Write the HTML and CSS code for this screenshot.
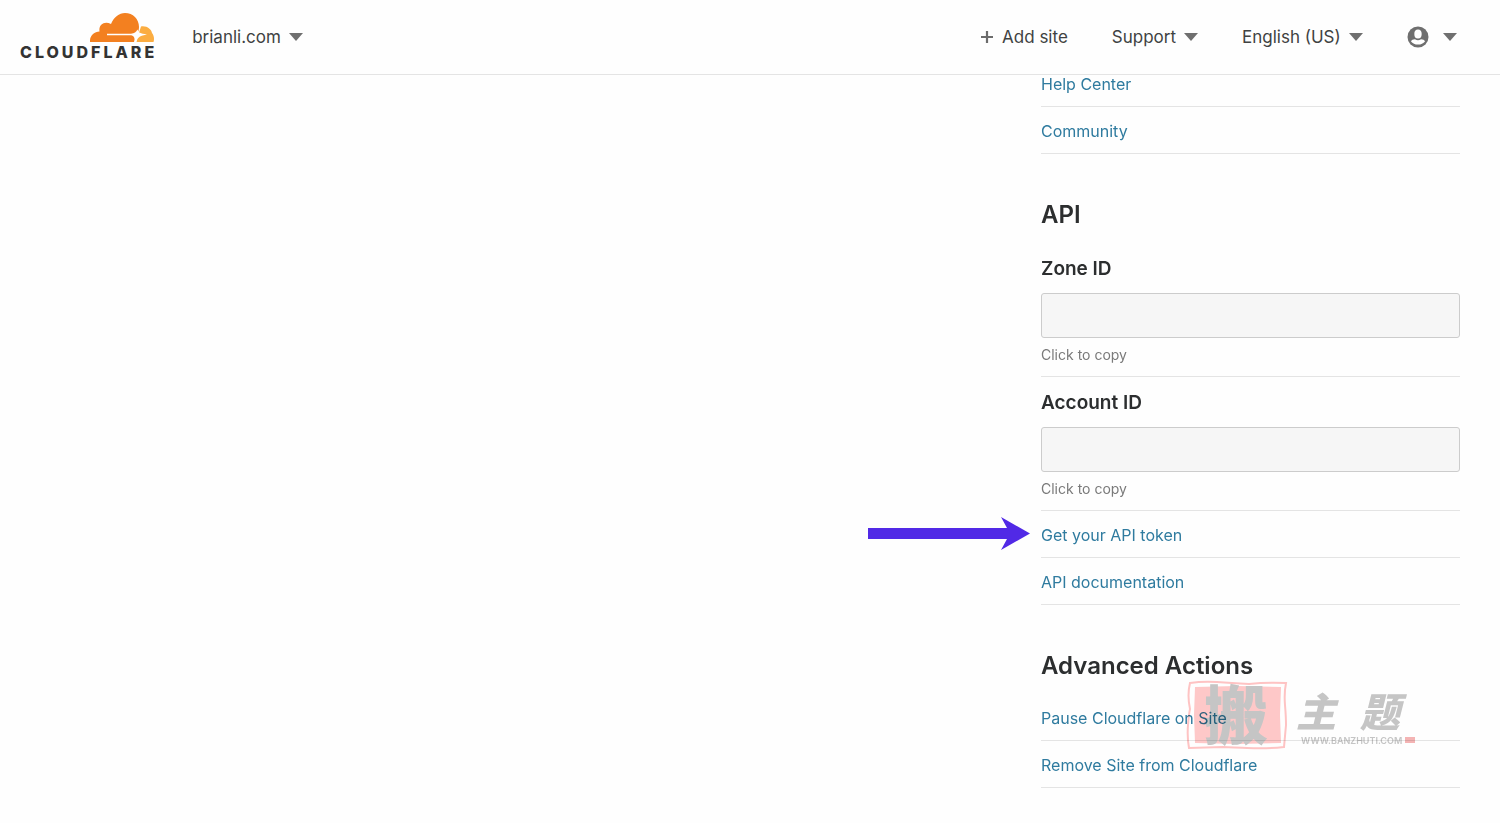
FILE: index.html
```html
<!DOCTYPE html>
<html lang="en">
<head>
    <meta charset="UTF-8">
    <meta name="viewport" content="width=device-width, initial-scale=1">
    <title>brianli.com | Cloudflare</title>
    <link rel="stylesheet" href="styles.css">
</head>
<body>

<header class="header">
    <a class="logo" href="#" aria-label="Cloudflare">
        <svg class="logo-cloud" viewBox="0 0 64 30" width="64" height="30" aria-hidden="true">
            <path fill="#f38020" d="M0 29 C-.5 23 4 18.500 9.500 18.500 C8.500 12 14 7.500 21 11 C24 4 29 0 35 0 C43 0 49 6 49 14 C49 17 48 19 47 21 L44 29 Z"/>
            <path fill="#fbad41" d="M46 29 L51 13.500 C57 12.500 61.500 16.500 62 20 C64 22.500 64.500 26 63.500 29 Z"/>
            <path fill="#fff" d="M17 20.700 L41 20.700 C44.500 20.500 46 19 47.500 16.500 C48.500 19.500 50 20.500 57 21.500 C50.500 22.500 47.500 24 46.500 29 L44.500 29 C45 25 44 22.500 41 22.200 L17 22.200 Z"/>
        </svg>
        <span class="logo-text">CLOUDFLARE</span>
    </a>
    <button class="nav-btn site" type="button" aria-haspopup="true">brianli.com<span class="caret"></span></button>

    <nav class="nav">
        <a class="nav-btn" href="#">
            <svg class="plus" viewBox="0 0 14 14" width="14" height="14" aria-hidden="true">
                <path d="M7 1v12M1 7h12" stroke="#6b6b6b" stroke-width="2.200"/>
            </svg>
            Add site
        </a>
        <button class="nav-btn" type="button" aria-haspopup="true">Support<span class="caret"></span></button>
        <label class="nav-btn">
            <select class="language" aria-label="Language">
                <option>English (US)</option>
            </select>
            <span class="caret"></span>
        </label>
        <button class="nav-btn account" type="button" aria-label="Account" aria-haspopup="true">
            <svg viewBox="0 0 22 22" width="22" height="22" aria-hidden="true">
                <circle cx="11" cy="11" r="10.500" fill="#6f6f6f"/>
                <ellipse cx="11" cy="8" rx="3.700" ry="4.500" fill="#fff"/>
                <path fill="#fff" d="M4 15.500 C4.500 14 6 13.500 8 13.300 Q11 15 14 13.300 C16 13.500 17.500 14 18 15.500 Q15.500 18.600 11 18.600 Q6.500 18.600 4 15.500 Z"/>
            </svg>
            <span class="caret"></span>
        </button>
    </nav>
</header>

<main class="main">
    <aside class="sidebar">
        <ul class="links">
            <li><a href="#">Help Center</a></li>
            <li><a href="#">Community</a></li>
        </ul>

        <section class="section">
            <h2>API</h2>
            <div class="field">
                <label for="zone-id">Zone ID</label>
                <input id="zone-id" type="text" readonly>
                <p>Click to copy</p>
            </div>
            <div class="field">
                <label for="account-id">Account ID</label>
                <input id="account-id" type="text" readonly>
                <p>Click to copy</p>
            </div>
            <ul class="links">
                <li>
                    <svg class="arrow" viewBox="0 0 162 34" width="162" height="34" aria-hidden="true">
                        <path fill="#5129e6" d="M0 11 H139 L133 0 L162 16.500 L133 33 L139 22 H0 Z"/>
                    </svg>
                    <a href="#">Get your API token</a>
                </li>
                <li><a href="#">API documentation</a></li>
            </ul>
        </section>

        <section class="section">
            <h2>Advanced Actions</h2>
            <ul class="links">
                <li><a href="#">Pause Cloudflare on Site</a></li>
                <li><a href="#">Remove Site from Cloudflare</a></li>
            </ul>
            <svg class="stamp" viewBox="0 0 230 70" width="230" height="70" aria-hidden="true">
                <path fill="none" stroke="#ffc4c4" stroke-width="2" d="M3 2 Q16 0 30 1 T62 3 Q80 1 99 2 Q97 12 98 24 T99 44 L97 66 Q80 68 60 67 T36 66 L2 67 Q0 56 1 44 T3 28 Q0 14 3 2 Z"/>
                <path fill="#ffc9c9" d="M8 6 L50 5 L94 6 L93 34 L94 62 L50 63 L8 62 L7 34 Z"/>
                <text class="stamp-big" x="17" y="58">搬</text>
                <text class="stamp-name" x="109" y="46">主</text>
                <text class="stamp-name" x="173" y="46">题</text>
                <text class="stamp-url" x="114" y="63">WWW.BANZHUTI.COM</text>
                <rect x="218" y="56" width="10" height="6" fill="#f5b5b5"/>
            </svg>
        </section>
    </aside>
</main>

</body>
</html>
```
FILE: styles.css
```css
* {
    box-sizing: border-box;
}

body {
    margin: 0;
    font-family: Inter, "Liberation Sans", "Noto Sans CJK SC", sans-serif;
    font-size: 16px;
    line-height: 24px;
    color: #36393a;
    background: #fefefe;
}

ul {
    margin: 0;
    padding: 0;
    list-style: none;
}

a {
    text-decoration: none;
}

.header {
    position: fixed;
    top: 0;
    left: 0;
    right: 0;
    z-index: 10;
    display: flex;
    align-items: center;
    height: 75px;
    padding: 0 43px 0 20px;
    background: #fefefe;
    border-bottom: 1px solid #e4e4e4;
}

.logo {
    display: flex;
    flex-direction: column;
    color: #333;
}

.logo-cloud {
    align-self: flex-end;
}

.logo-text {
    margin-right: -3px;
    font-size: 16px;
    font-weight: 800;
    line-height: 18px;
    letter-spacing: 3px;
}

.nav {
    display: flex;
    gap: 44px;
    margin-left: auto;
}

.nav-btn {
    display: flex;
    align-items: center;
    gap: 8px;
    padding: 0;
    font: inherit;
    font-size: 17px;
    color: #404242;
    background: none;
    border: none;
    cursor: pointer;
}

.site {
    margin-left: 38px;
}

.account {
    gap: 14px;
}

.language {
    padding: 0;
    font: inherit;
    color: inherit;
    background: none;
    border: none;
    appearance: none;
}

.caret {
    border: 7px solid transparent;
    border-top: 8px solid #6f6f6f;
    border-bottom: none;
}

.main {
    display: flex;
    justify-content: flex-end;
    padding: 60px 40px 32px;
}

.sidebar {
    width: 419px;
}

.links > li {
    position: relative;
    padding: 12px 0 10px;
    border-bottom: 1px solid #e4e4e4;
}

.links a {
    color: #2f7b9f;
}

.section {
    position: relative;
    margin-top: 45px;
}

.section h2 {
    margin: 0 0 12px;
    font-size: 24px;
    font-weight: 600;
    line-height: 32px;
    color: #2c2e2f;
}

.field {
    padding: 14px 0 11px;
    border-bottom: 1px solid #e4e4e4;
}

.field label {
    display: block;
    font-size: 19px;
    font-weight: 600;
    color: #2c2e2f;
}

.field input {
    display: block;
    width: 100%;
    height: 45px;
    margin: 12px 0 7px;
    padding: 0 12px;
    font: inherit;
    background: #f6f6f6;
    border: 1px solid #ccc;
    border-radius: 3px;
}

.field p {
    margin: 0;
    font-size: 14px;
    line-height: 20px;
    color: #7a7a7a;
}

.arrow {
    position: absolute;
    top: 6px;
    right: 100%;
    margin-right: 11px;
}

.stamp {
    position: absolute;
    top: 31px;
    right: 43px;
    overflow: visible;
    mix-blend-mode: multiply;
    pointer-events: none;
}

.stamp text {
    font-family: "Noto Sans CJK SC", sans-serif;
    font-weight: 900;
    fill: #c6c6c6;
}

.stamp .stamp-big {
    font-size: 64px;
}

.stamp .stamp-name {
    font-size: 40px;
    font-style: italic;
}

.stamp .stamp-url {
    font-family: Inter, sans-serif;
    font-size: 9px;
    font-weight: 600;
}
```
